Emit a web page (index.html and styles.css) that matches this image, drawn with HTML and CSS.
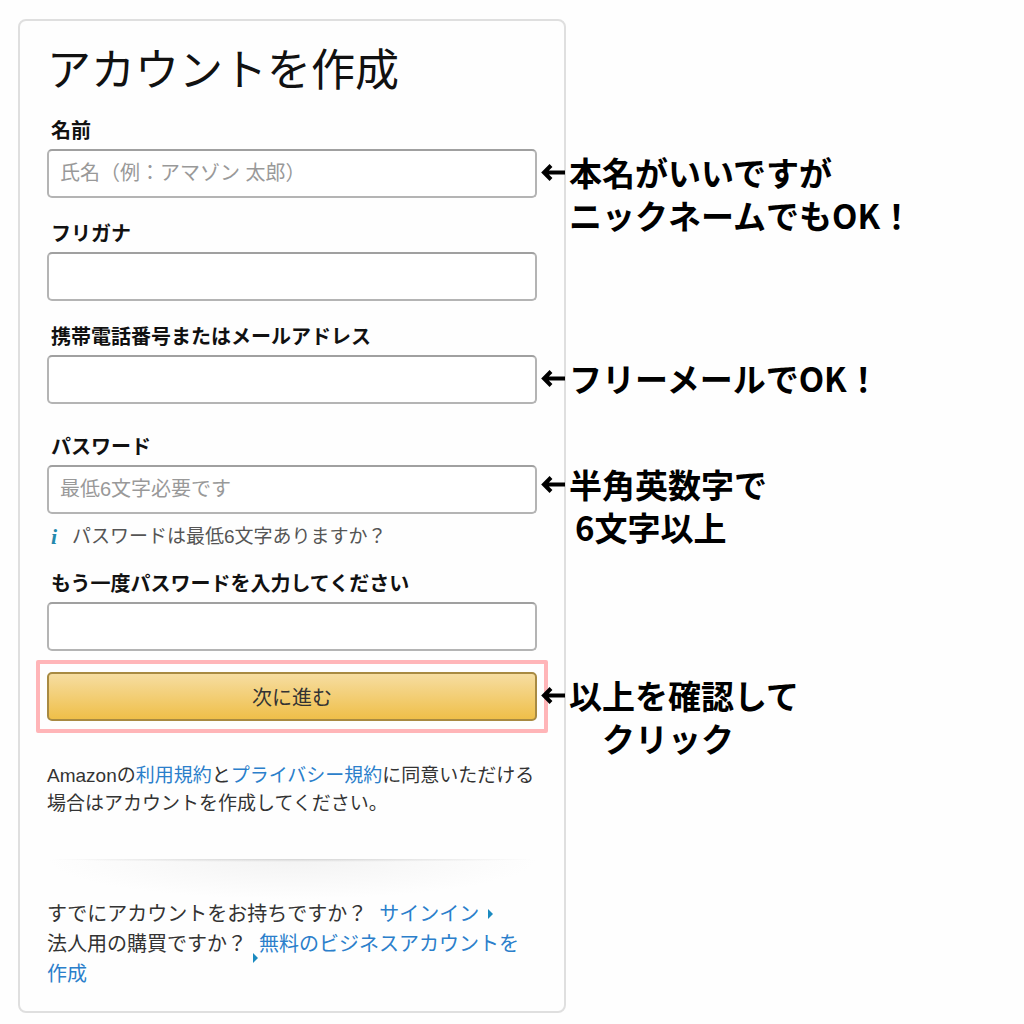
FILE: index.html
```
<!DOCTYPE html>
<html lang="ja">
<head>
    <meta charset="UTF-8">
    <meta name="viewport" content="width=device-width, initial-scale=1.0">
    <title>アカウントを作成</title>
    <link rel="stylesheet" href="styles.css">
</head>
<body>
    <main class="card">
        <form>
            <h1>アカウントを作成</h1>
            <div class="field">
                <label for="name">名前</label>
                <div class="control">
                    <input type="text" name="name" id="name" placeholder="氏名（例：アマゾン 太郎）">
                    <p class="note">
                        <svg class="arrow" viewBox="0 0 24 16"><path d="M10 1 L3 8 L10 15 M4 8 H24"/></svg>
                        <span>本名がいいですが<br>ニックネームでもOK！</span>
                    </p>
                </div>
            </div>
            <div class="field">
                <label for="kana">フリガナ</label>
                <div class="control">
                    <input type="text" name="kana" id="kana">
                </div>
            </div>
            <div class="field">
                <label for="email">携帯電話番号またはメールアドレス</label>
                <div class="control">
                    <input type="text" name="email" id="email">
                    <p class="note">
                        <svg class="arrow" viewBox="0 0 24 16"><path d="M10 1 L3 8 L10 15 M4 8 H24"/></svg>
                        <span>フリーメールでOK！</span>
                    </p>
                </div>
            </div>
            <div class="field password">
                <label for="password">パスワード</label>
                <div class="control">
                    <input type="password" name="password" id="password" placeholder="最低6文字必要です">
                    <p class="note raised">
                        <svg class="arrow" viewBox="0 0 24 16"><path d="M10 1 L3 8 L10 15 M4 8 H24"/></svg>
                        <span>半角英数字で<span class="second">6文字以上</span></span>
                    </p>
                </div>
                <p class="hint"><i class="info">i</i>パスワードは最低6文字ありますか？</p>
            </div>
            <div class="field">
                <label for="password-check">もう一度パスワードを入力してください</label>
                <div class="control">
                    <input type="password" name="password-check" id="password-check">
                </div>
            </div>
            <div class="highlight">
                <div class="control">
                    <button type="submit">次に進む</button>
                    <p class="note">
                        <svg class="arrow" viewBox="0 0 24 16"><path d="M10 1 L3 8 L10 15 M4 8 H24"/></svg>
                        <span>以上を確認して<span class="second wide">クリック</span></span>
                    </p>
                </div>
            </div>
        </form>
        <p class="terms">Amazonの<a href="#">利用規約</a>と<a href="#">プライバシー規約</a>に同意いただける場合はアカウントを作成してください。</p>
        <div class="divider"></div>
        <div class="links">
            <p>すでにアカウントをお持ちですか？<a class="signin" href="#">サインイン</a></p>
            <p>法人用の購買ですか？<a class="business" href="#">無料のビジネスアカウントを作成</a></p>
        </div>
    </main>
</body>
</html>
```
FILE: styles.css
```
*{
    box-sizing: border-box;
}

body{
    margin: 0;
    padding: 19px 18px 11px;
    background-color: #fefefe;
    color: #333;
    font-family: "Liberation Sans", "Noto Sans CJK JP", sans-serif;
}

h1, p{
    margin: 0;
}

a{
    color: #2b7fcb;
    text-decoration: none;
}

.card{
    max-width: 548px;
    padding: 20px 27px 22px;
    border: 2px solid #dfdfdf;
    border-radius: 8px;
}

h1{
    margin-bottom: 16px;
    color: #111;
    font-size: 44px;
    font-weight: 400;
    line-height: 60px;
}

.field{
    margin-top: 22px;
}

h1 + .field{
    margin-top: 0;
}

.field.password{
    margin-top: 29px;
}

label{
    display: block;
    margin-bottom: 4px;
    padding-left: 4px;
    color: #111;
    font-size: 20px;
    font-weight: bold;
    line-height: 28px;
}

.control{
    position: relative;
}

input, button{
    display: block;
    width: 100%;
    height: 49px;
    font-family: inherit;
    font-size: 20px;
}

input{
    padding: 0 11px;
    border: 2px solid #b4b4b4;
    border-top-color: #a0a0a0;
    border-radius: 5px;
    background-color: #fff;
}

input::placeholder{
    color: #999;
}

button{
    border: 2px solid #a88a42;
    border-radius: 5px;
    background: linear-gradient(#f6dda1, #efbf49);
    color: #333;
}

.highlight{
    margin: 9px -11px 0;
    padding: 8px 7px;
    border: 4px solid #ffb5b8;
    border-radius: 2px;
}

.hint{
    display: flex;
    margin-top: 10px;
    margin-bottom: -2px;
    color: #555;
    font-size: 19px;
    line-height: 26px;
}

.info{
    width: 25px;
    padding-left: 4px;
    color: #2489ad;
    font-family: "Liberation Serif", serif;
    font-size: 22px;
    font-weight: bold;
}

/* handwritten style notes that run out over the card's right edge */
.note{
    position: absolute;
    top: 2px;
    left: calc(100% + 4px);
    display: flex;
    gap: 4px;
    color: #000;
    font-family: "Noto Sans CJK JP", sans-serif;
    font-size: 33px;
    font-weight: bold;
    line-height: 43px;
    white-space: nowrap;
}

.note.raised{
    top: -2px;
}

.arrow{
    width: 24px;
    height: 43px;
    overflow: visible;
    fill: none;
    stroke: #000;
    stroke-width: 4;
}

.second{
    display: block;
    padding-left: 6px;
}

.second.wide{
    padding-left: 1em;
}

.terms{
    margin-top: 29px;
    font-size: 19px;
    line-height: 28px;
}

.divider{
    height: 40px;
    margin-top: 41px;
    background:
        radial-gradient(ellipse 50% 3px at top, #d4d4d4, transparent),
        radial-gradient(ellipse 50% 100% at top, #f3f3f3, transparent);
}

.links{
    padding-right: 10px;
    font-size: 20px;
    line-height: 30px;
}

.links a{
    margin-left: 12px;
}

.signin::after, .business::before{
    content: "";
    display: inline-block;
    border: solid transparent;
    border-width: 5px 0 5px 5px;
    border-left-color: #1b8ac0;
}

.signin::after{
    margin-left: 9px;
    vertical-align: 2px;
}

.business{
    position: relative;
}

.business::before{
    position: absolute;
    top: 20px;
    left: -6px;
}
```
